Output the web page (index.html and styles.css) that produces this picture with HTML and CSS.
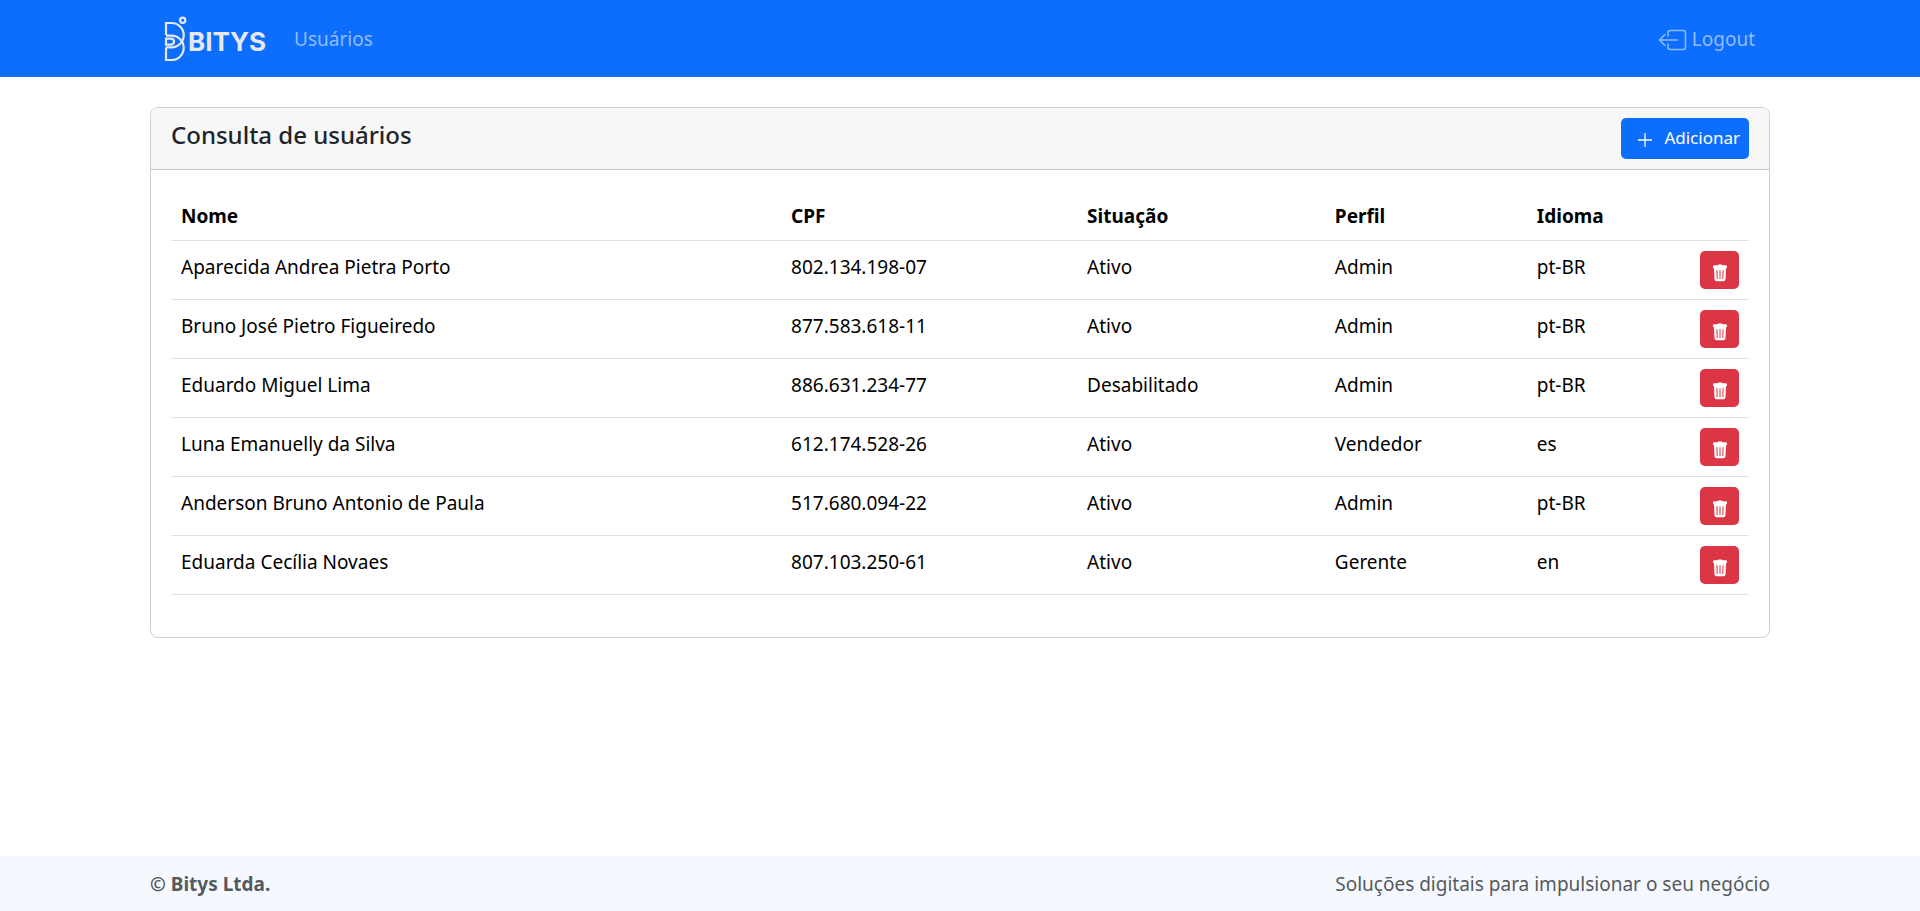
FILE: index.html
```html
<!DOCTYPE html>
<html lang="pt-BR">
<head>
<meta charset="utf-8">
<meta name="viewport" content="width=device-width, initial-scale=1">
<title>Consulta de usuários</title>
<link rel="stylesheet" href="styles.css">
</head>
<body>
<svg class="sprite" aria-hidden="true">
  <symbol id="trash" viewBox="0 0 16 18">
    <path fill="currentColor" fill-rule="evenodd" d="M5.6 1.2Q5.8.4 6.6.4h2.8q.8 0 1 .8h3.3q1.3 0 1.3 1.3v.8q0 1-1 1.2l-.5 10.8q-.1 2-2.1 2H4.6q-2 0-2.1-2L2 4.500q-1-.2-1-1.2v-.8q0-1.300 1.300-1.300zM4.400 6.200l.3 8.800h1l-.2-8.800zM7.500 6.200v8.800h1V6.200zM10.600 6.200l-.3 8.800h1l.3-8.800z"/>
  </symbol>
</svg>
<header class="navbar">
  <div class="container navbar-inner">
    <a class="brand" href="#" aria-label="Bitys">
      <svg class="brand-logo" viewBox="0 0 100 47">
        <g class="brand-mark">
          <circle cx="17.700" cy="5.300" r="2.600"/>
          <path d="M1 20V8h5.500a12.200 12.200 0 0 1 0 24.400H1"/>
          <path d="M1 20.600h5.500a12.200 12.200 0 0 1 0 24.400H1V32.400"/>
          <path d="M1 23.600h5a3 3 0 0 1 0 6H1z"/>
        </g>
        <text class="brand-text" x="23" y="36">BITYS</text>
      </svg>
    </a>
    <a class="nav-link" href="#">Usuários</a>
    <a class="nav-link logout" href="#">
      <svg class="logout-icon" viewBox="0 0 30 22" aria-hidden="true">
        <path d="M10 7V3.500Q10 1.500 12 1.500H25.500Q27.500 1.500 27.500 3.500V18.500Q27.500 20.500 25.500 20.500H12Q10 20.500 10 18.500V15M19.500 11H1.500M7 5.500 1.500 11 7 16.500"/>
      </svg>
      Logout
    </a>
  </div>
</header>
<main class="container main">
  <section class="card">
    <div class="card-header">
      <h1 class="card-title">Consulta de usuários</h1>
      <button class="btn btn-primary" type="button">
        <svg class="plus-icon" viewBox="0 0 14 14" aria-hidden="true"><path d="M7 0v14M0 7h14"/></svg>
        Adicionar
      </button>
    </div>
    <div class="card-body">
      <table class="table">
        <colgroup>
          <col class="col-name"><col class="col-cpf"><col class="col-status"><col class="col-role"><col class="col-lang"><col class="col-action">
        </colgroup>
        <thead>
          <tr><th scope="col">Nome</th><th scope="col">CPF</th><th scope="col">Situação</th><th scope="col">Perfil</th><th scope="col">Idioma</th><td></td></tr>
        </thead>
        <tbody>
          <tr><td>Aparecida Andrea Pietra Porto</td><td>802.134.198-07</td><td>Ativo</td><td>Admin</td><td>pt-BR</td><td><button class="btn btn-danger" type="button" aria-label="Excluir"><svg class="trash-icon"><use href="#trash"/></svg></button></td></tr>
          <tr><td>Bruno José Pietro Figueiredo</td><td>877.583.618-11</td><td>Ativo</td><td>Admin</td><td>pt-BR</td><td><button class="btn btn-danger" type="button" aria-label="Excluir"><svg class="trash-icon"><use href="#trash"/></svg></button></td></tr>
          <tr><td>Eduardo Miguel Lima</td><td>886.631.234-77</td><td>Desabilitado</td><td>Admin</td><td>pt-BR</td><td><button class="btn btn-danger" type="button" aria-label="Excluir"><svg class="trash-icon"><use href="#trash"/></svg></button></td></tr>
          <tr><td>Luna Emanuelly da Silva</td><td>612.174.528-26</td><td>Ativo</td><td>Vendedor</td><td>es</td><td><button class="btn btn-danger" type="button" aria-label="Excluir"><svg class="trash-icon"><use href="#trash"/></svg></button></td></tr>
          <tr><td>Anderson Bruno Antonio de Paula</td><td>517.680.094-22</td><td>Ativo</td><td>Admin</td><td>pt-BR</td><td><button class="btn btn-danger" type="button" aria-label="Excluir"><svg class="trash-icon"><use href="#trash"/></svg></button></td></tr>
          <tr><td>Eduarda Cecília Novaes</td><td>807.103.250-61</td><td>Ativo</td><td>Gerente</td><td>en</td><td><button class="btn btn-danger" type="button" aria-label="Excluir"><svg class="trash-icon"><use href="#trash"/></svg></button></td></tr>
        </tbody>
      </table>
    </div>
  </section>
</main>
<footer class="footer">
  <div class="container footer-inner">
    <strong>© Bitys Ltda.</strong>
    <span>Soluções digitais para impulsionar o seu negócio</span>
  </div>
</footer>
</body>
</html>
```
FILE: styles.css
```css
*, *::before, *::after { box-sizing: border-box; }

body {
  margin: 0;
  min-height: 100vh;
  display: flex;
  flex-direction: column;
  font-family: "Noto Sans", "Open Sans", sans-serif;
  font-size: 19px;
  line-height: 30px;
  color: #212529;
  background: #fff;
}

.sprite { display: none; }

.container {
  width: 100%;
  max-width: 1650px;
  margin: 0 auto;
  padding: 0 15px;
}

.navbar { background: #0d6efd; }

.navbar-inner {
  display: flex;
  align-items: center;
  padding: 15px 30px;
}

.brand { display: flex; margin-right: 29px; }
.brand-logo { width: 100px; height: 47px; overflow: visible; }

.brand-mark {
  fill: none;
  stroke: #e6e8ec;
  stroke-width: 2.2;
}

.brand-text {
  font-family: Inter, sans-serif;
  font-size: 26px;
  font-weight: 700;
  fill: #e6e8ec;
}

.nav-link {
  display: flex;
  align-items: center;
  color: rgba(255, 255, 255, .55);
  text-decoration: none;
}

.logout { margin-left: auto; gap: 4px; }

.logout-icon {
  width: 30px;
  height: 22px;
  margin-top: 3px;
  fill: none;
  stroke: currentColor;
  stroke-width: 1.5;
  stroke-linecap: round;
  stroke-linejoin: round;
}

.main { flex: 1; padding-top: 30px; padding-bottom: 30px; }

.card {
  border: 1px solid #cfcfd0;
  border-radius: 8px;
  overflow: hidden;
}

.card-header {
  display: flex;
  align-items: flex-start;
  justify-content: space-between;
  padding: 10px 20px;
  background: #f7f7f7;
  border-bottom: 1px solid #c8c8c8;
}

.card-title {
  margin: 0;
  font-size: 24px;
  font-weight: 500;
  line-height: 34px;
}

.card-body { padding: 20px; }

.btn {
  display: inline-flex;
  align-items: center;
  border: 0;
  border-radius: 5px;
  color: #fff;
  font-family: inherit;
  font-size: 17px;
}

.btn-primary {
  gap: 12px;
  padding: 4px 9px 6px 17px;
  line-height: 31px;
  background: #0d6efd;
}

.btn-danger {
  justify-content: center;
  width: 39px;
  height: 38px;
  padding: 5px 0 0;
  background: #dc3545;
}

.plus-icon {
  width: 14px;
  height: 14px;
  margin-top: 4px;
  stroke: currentColor;
  stroke-width: 1.3;
}

.trash-icon { width: 16px; height: 18px; }

.table {
  width: 100%;
  margin-bottom: 22px;
  table-layout: fixed;
  border-collapse: separate;
  border-spacing: 0;
  color: #000;
}

.table th,
.table td {
  padding: 11px 10px 9px;
  border-bottom: 1px solid #dee2e6;
  text-align: left;
  vertical-align: top;
}

.table td:last-child { padding: 10px; }
.table .btn { display: flex; margin-left: auto; }

.col-name { width: 38.66%; }
.col-cpf { width: 18.76%; }
.col-status { width: 15.7%; }
.col-role { width: 12.8%; }
.col-lang { width: 10.3%; }
.col-action { width: 3.78%; }

.footer {
  background: #f5f9ff;
  color: #56595d;
}

.footer-inner {
  display: flex;
  justify-content: space-between;
  padding-top: 13px;
  padding-bottom: 12px;
}
```
